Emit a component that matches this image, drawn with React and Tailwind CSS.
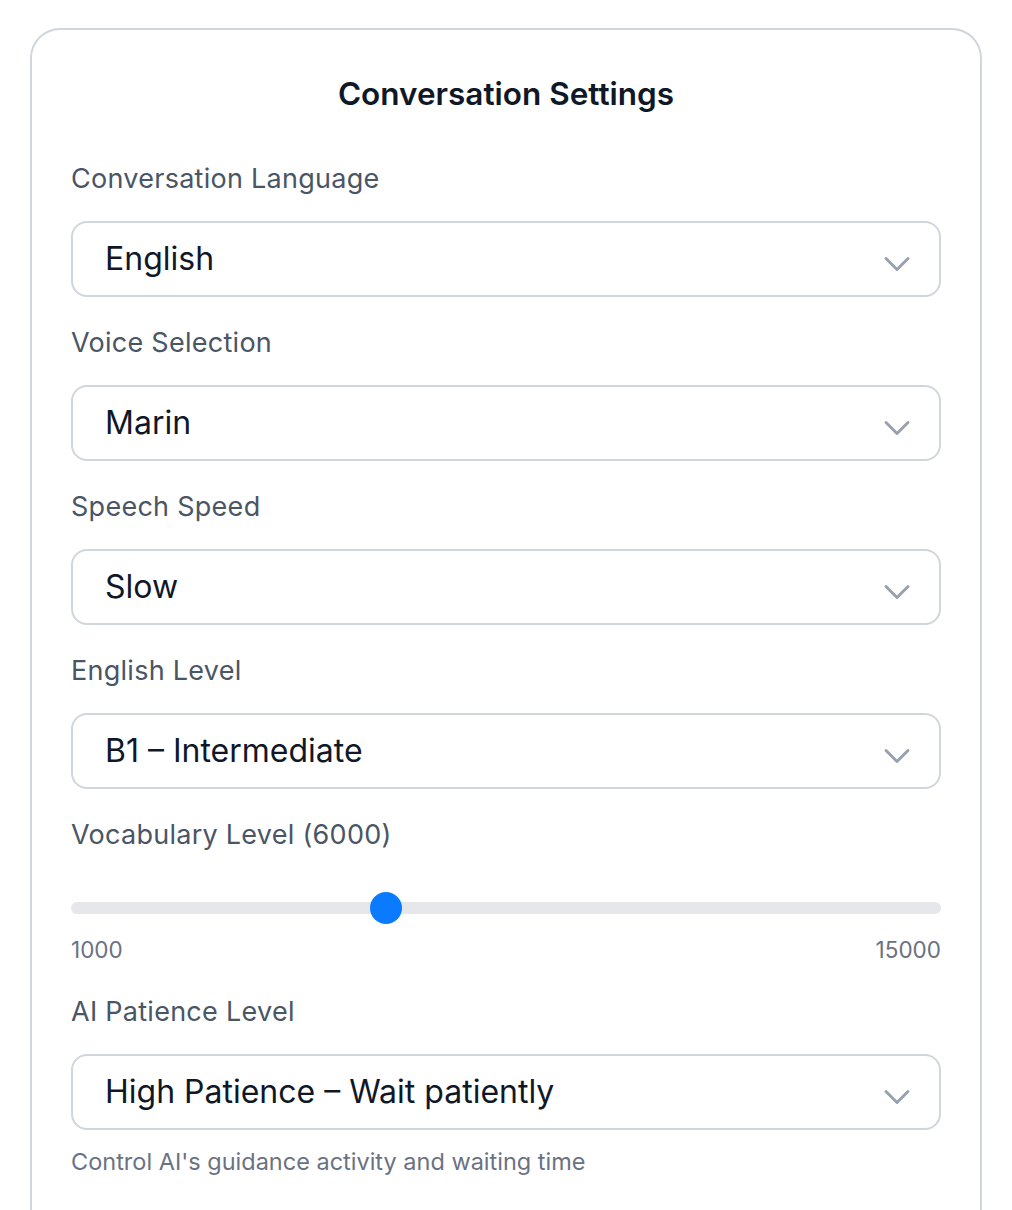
import { ChevronDown } from "lucide-react";

const fields = [
  { label: "Conversation Language", value: "English" },
  { label: "Voice Selection", value: "Marin" },
  { label: "Speech Speed", value: "Slow" },
  { label: "English Level", value: "B1 – Intermediate" },
];

function SelectBox({ value }) {
  return (
    <div className="flex h-[76px] items-center justify-between rounded-[16px] border-2 border-gray-300 bg-white pl-[32px] pr-[20px]">
      <span className="text-[32px] leading-none text-gray-900">{value}</span>
      <ChevronDown className="mt-[10px] h-[44px] w-[44px] text-gray-400" strokeWidth={1.6} />
    </div>
  );
}

function Field({ label, children }) {
  return (
    <div className="flex flex-col">
      <label className="mb-[24px] text-[27px] leading-[36px] tracking-[0.01em] text-gray-600">{label}</label>
      {children}
    </div>
  );
}

export default function App() {
  const vocab = 6000;
  const min = 1000;
  const max = 15000;
  const pct = (vocab - min) / (max - min);

  return (
    <div className="min-h-screen bg-white px-[30px] pt-[28px] font-['Inter',sans-serif]">
      <div className="rounded-t-[30px] border-2 border-b-0 border-gray-300 bg-white px-[39px] pb-[40px] pt-[42px]">
        <h2 className="mb-[45px] text-center text-[31.5px] font-semibold leading-[44px] text-gray-900">
          Conversation Settings
        </h2>

        <div className="flex flex-col gap-[28px]">
          {fields.map((f) => (
            <Field key={f.label} label={f.label}>
              <SelectBox value={f.value} />
            </Field>
          ))}

          <div className="flex flex-col">
            <label className="mb-[49px] text-[27px] leading-[36px] tracking-[0.01em] text-gray-600">
              Vocabulary Level ({vocab})
            </label>
            <div className="relative h-[12px] rounded-full bg-gray-200">
              {/* thumb sits over the track */}
              <div
                className="absolute top-1/2 h-[32px] w-[32px] -translate-y-1/2 rounded-full bg-[#0a7aff]"
                style={{ left: `calc(${pct} * (100% - 32px))` }}
              />
            </div>
            <div className="mt-[21px] flex justify-between text-[22.5px] leading-[30px] text-gray-500">
              <span>{min}</span>
              <span>{max}</span>
            </div>
          </div>

          <div className="mt-[1px] flex flex-col">
            <label className="mb-[24px] text-[27px] leading-[36px] tracking-[0.01em] text-gray-600">AI Patience Level</label>
            <SelectBox value="High Patience – Wait patiently" />
            <p className="mt-[17px] text-[23.5px] leading-[30px] text-gray-500">
              Control AI's guidance activity and waiting time
            </p>
          </div>
        </div>
      </div>
    </div>
  );
}
